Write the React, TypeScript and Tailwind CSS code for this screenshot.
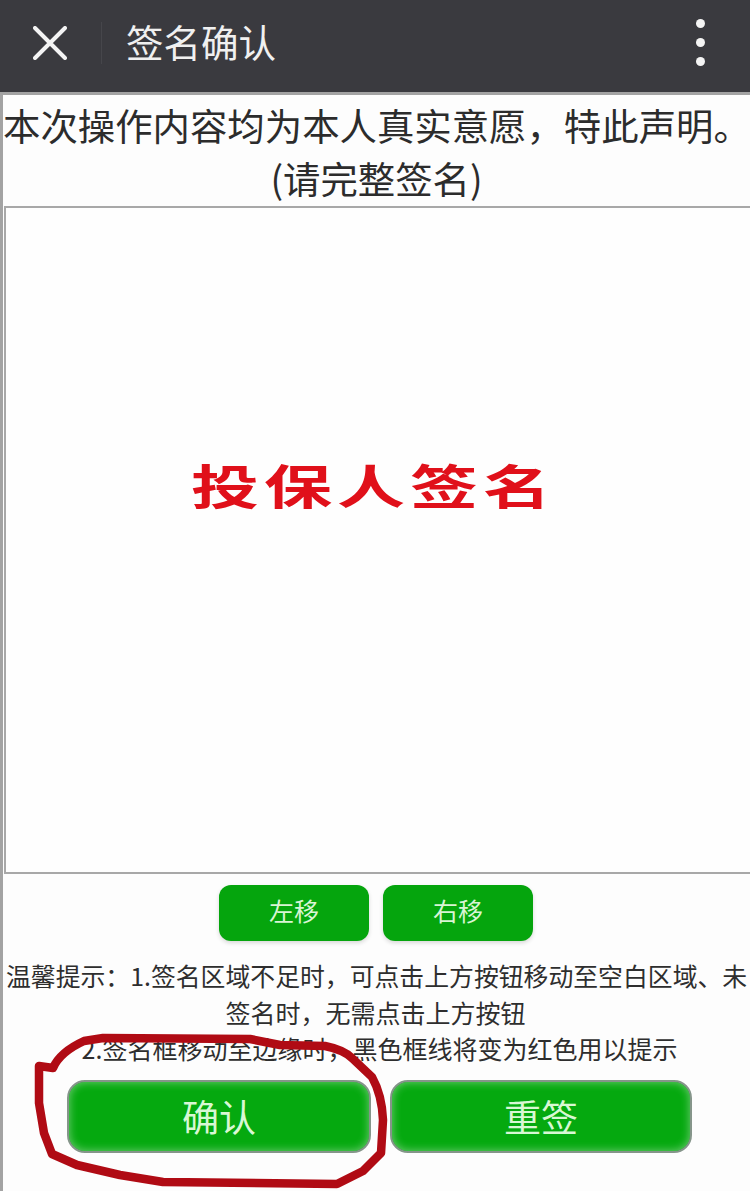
import React from 'react';

const cjk = "font-['Noto_Sans_CJK_SC','Noto_Sans',sans-serif]";

const MoveButton = ({ label }: { label: string }) => (
  <button className="w-[150px] h-[56px] pb-[5px] rounded-[12px] bg-[#05a50d] text-[#d8f5d4] text-[25px] leading-none shadow-[0_2px_4px_rgba(0,0,0,0.15)]">
    {label}
  </button>
);

const ActionButton = ({ label, width }: { label: string; width: string }) => (
  <button
    className={`${width} h-[73px] rounded-[18px] border-2 border-[#85958a] bg-[#05a90f] text-[#d8f8d4] text-[37px] leading-none shadow-[inset_0_0_10px_rgba(255,255,255,0.45)]`}
  >
    {label}
  </button>
);

const App: React.FC = () => {
  return (
    <div className={`relative w-[750px] h-[1191px] overflow-hidden bg-[#fdfdfd] ${cjk}`}>
      {/* title bar */}
      <header className="h-[92px] bg-[#3a3a3f] flex items-center text-[#f0f0f0]">
        <svg width="34" height="34" viewBox="0 0 34 34" className="ml-[33px] mb-[7px]">
          <path d="M2 2 L32 32 M32 2 L2 32" stroke="#f4f4f4" strokeWidth="4" strokeLinecap="round" />
        </svg>
        <div className="ml-[34px] mb-[7px] w-px h-[42px] bg-[#46464b]" />
        <h1 className="ml-[24px] mb-[10px] text-[37.5px] leading-none font-normal">签名确认</h1>
        <div className="ml-auto mr-[45px] mb-[7px] flex flex-col gap-[10px]">
          <span className="w-[9px] h-[9px] rounded-full bg-[#f4f4f4]" />
          <span className="w-[9px] h-[9px] rounded-full bg-[#f4f4f4]" />
          <span className="w-[9px] h-[9px] rounded-full bg-[#f4f4f4]" />
        </div>
      </header>

      <main className="h-[1099px] border-t-[3px] border-l-[3px] border-[#a3a3a3]">
        {/* statement */}
        <section className="h-[111px] pt-[4px] text-center text-[37.4px] leading-[53px] text-[#2c2c2c] whitespace-nowrap">
          <p className="pr-[3px]">本次操作内容均为本人真实意愿，特此声明。</p>
          <p>(请完整签名)</p>
        </section>

        {/* signature box */}
        <section className="h-[668px] ml-[1px] pb-[113px] border-y-2 border-l-2 border-[#a8a8a8] flex items-center justify-center bg-[#fefefe]">
          <div className="mr-[14px] flex gap-[5px] scale-y-[0.68] text-[68px] leading-none font-bold text-[#e0101a]">
            <span>投</span>
            <span>保</span>
            <span>人</span>
            <span>签</span>
            <span>名</span>
          </div>
        </section>

        <div className="pt-[11px] flex justify-center gap-[14px] pr-[1px]">
          <MoveButton label="左移" />
          <MoveButton label="右移" />
        </div>

        {/* hint */}
        <section className="mt-[16px] text-[25px] leading-[36.5px] text-[#2e2e2e] text-center whitespace-nowrap">
          <p className="pl-[3px] text-left text-[24.85px]">温馨提示：1.签名区域不足时，可点击上方按钮移动至空白区域、未</p>
          <p className="pr-[2px]">签名时，无需点击上方按钮</p>
          <p className="pl-[6px]">2.签名框移动至边缘时，黑色框线将变为红色用以提示</p>
        </section>

        <div className="mt-[13px] ml-[64px] flex gap-[19px]">
          <ActionButton label="确认" width="w-[304px]" />
          <ActionButton label="重签" width="w-[302px]" />
        </div>
      </main>

      {/* hand-drawn red ring over the confirm button */}
      <svg width="750" height="1191" viewBox="0 0 750 1191" fill="none" className="absolute inset-0 pointer-events-none">
        <path
          d="M53 1068 Q60 1052 84 1041 L103 1038 L250 1039 L280 1045 L325 1046 Q345 1050 353 1059 L372 1077 Q382 1095 383 1120 L381 1153 L363 1171 L337 1184 L163 1182 L120 1175 L77 1165 L52 1154 L44 1133 L39 1103 L39 1066 Z"
          stroke="#b00b14"
          strokeWidth="8.5"
          strokeLinejoin="round"
        />
      </svg>
    </div>
  );
};

export default App;
